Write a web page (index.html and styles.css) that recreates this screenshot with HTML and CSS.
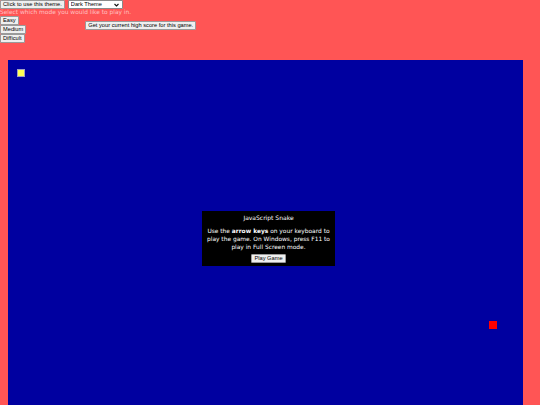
FILE: index.html
```html
<!DOCTYPE html>
<html>
<head>
<meta charset="utf-8">
<link rel="stylesheet" href="styles.css">
</head>
<body>
<div class="theme-row">
  <button class="btn">Click to use this theme.</button>
  <span class="select-wrap">
    <select class="theme-select"><option>Dark Theme</option><option>Light Theme</option></select>
    <svg class="chev" width="5" height="4" viewBox="0 0 5 4"><path d="M0.5 1 L2.5 3 L4.5 1" fill="none" stroke="#111" stroke-width="1.1"/></svg>
  </span>
</div>
<div class="mode-text">Select which mode you would like to play in.</div>
<div class="mode-row">
  <div class="mode-col">
    <button class="btn">Easy</button>
    <button class="btn">Medium</button>
    <button class="btn">Difficult</button>
  </div>
  <button class="btn score">Get your current high score for this game.</button>
</div>
<div class="board">
  <div class="snake"></div>
  <div class="food"></div>
  <div class="welcome">
    <div class="welcome-title">JavaScript Snake</div>
    <div class="welcome-text">Use the <b>arrow keys</b> on your keyboard to play the game. On Windows, press F11 to play in Full Screen mode.</div>
    <button class="btn play">Play Game</button>
  </div>
</div>
</body>
</html>
```
FILE: styles.css
```css
html, body {
  margin: 0;
  padding: 0;
  background: #ff5555;
  overflow: hidden;
  height: 405px;
}
body {
  font-family: "DejaVu Sans", Verdana, sans-serif;
}
.btn {
  font-family: "Liberation Sans", Arial, sans-serif;
  font-size: 5.7px;
  line-height: 7px;
  color: #000;
  background: #efefef;
  border: 1px solid #9a9a9a;
  border-radius: 1px;
  padding: 0 2px;
  height: 9px;
  margin: 0;
  display: block;
}
.theme-row {
  display: flex;
  align-items: flex-start;
  gap: 3px;
}
.select-wrap {
  position: relative;
  display: block;
  width: 55px;
  height: 9px;
}
.theme-select {
  appearance: none;
  -webkit-appearance: none;
  width: 55px;
  height: 9px;
  margin: 0;
  padding: 0 2px;
  font-family: "Liberation Sans", Arial, sans-serif;
  font-size: 5.7px;
  line-height: 7px;
  background: #fff;
  border: 1px solid #8a8a8a;
  border-radius: 1px;
  color: #000;
  display: block;
}
.chev {
  position: absolute;
  right: 4px;
  top: 3px;
  pointer-events: none;
}
.mode-text {
  font-size: 5.9px;
  line-height: 7px;
  color: #ffc0c0;
  height: 7px;
}
.mode-row {
  display: flex;
  align-items: flex-start;
}
.mode-col {
  display: flex;
  flex-direction: column;
  align-items: flex-start;
}
.score {
  margin-left: 59px;
  margin-top: 5px;
}
.board {
  position: relative;
  margin: 17px 0 0 8px;
  width: 515px;
  height: 400px;
  background: #0000a0;
}
.snake {
  position: absolute;
  left: 9px;
  top: 9px;
  width: 6px;
  height: 6px;
  background: #ffff55;
  border: 1px solid #a0a0c0;
}
.food {
  position: absolute;
  left: 481px;
  top: 261px;
  width: 8px;
  height: 8px;
  background: #ff0000;
}
.welcome {
  position: absolute;
  left: 194px;
  top: 151px;
  width: 133px;
  height: 55px;
  box-sizing: border-box;
  background: #000;
  color: #fff;
  text-align: center;
  padding: 3px 2px 0;
}
.welcome-title {
  font-size: 6px;
  line-height: 8px;
  margin-bottom: 5px;
}
.welcome-text {
  font-size: 5.9px;
  line-height: 8px;
}
.play {
  margin: 3px auto 0;
}
```
